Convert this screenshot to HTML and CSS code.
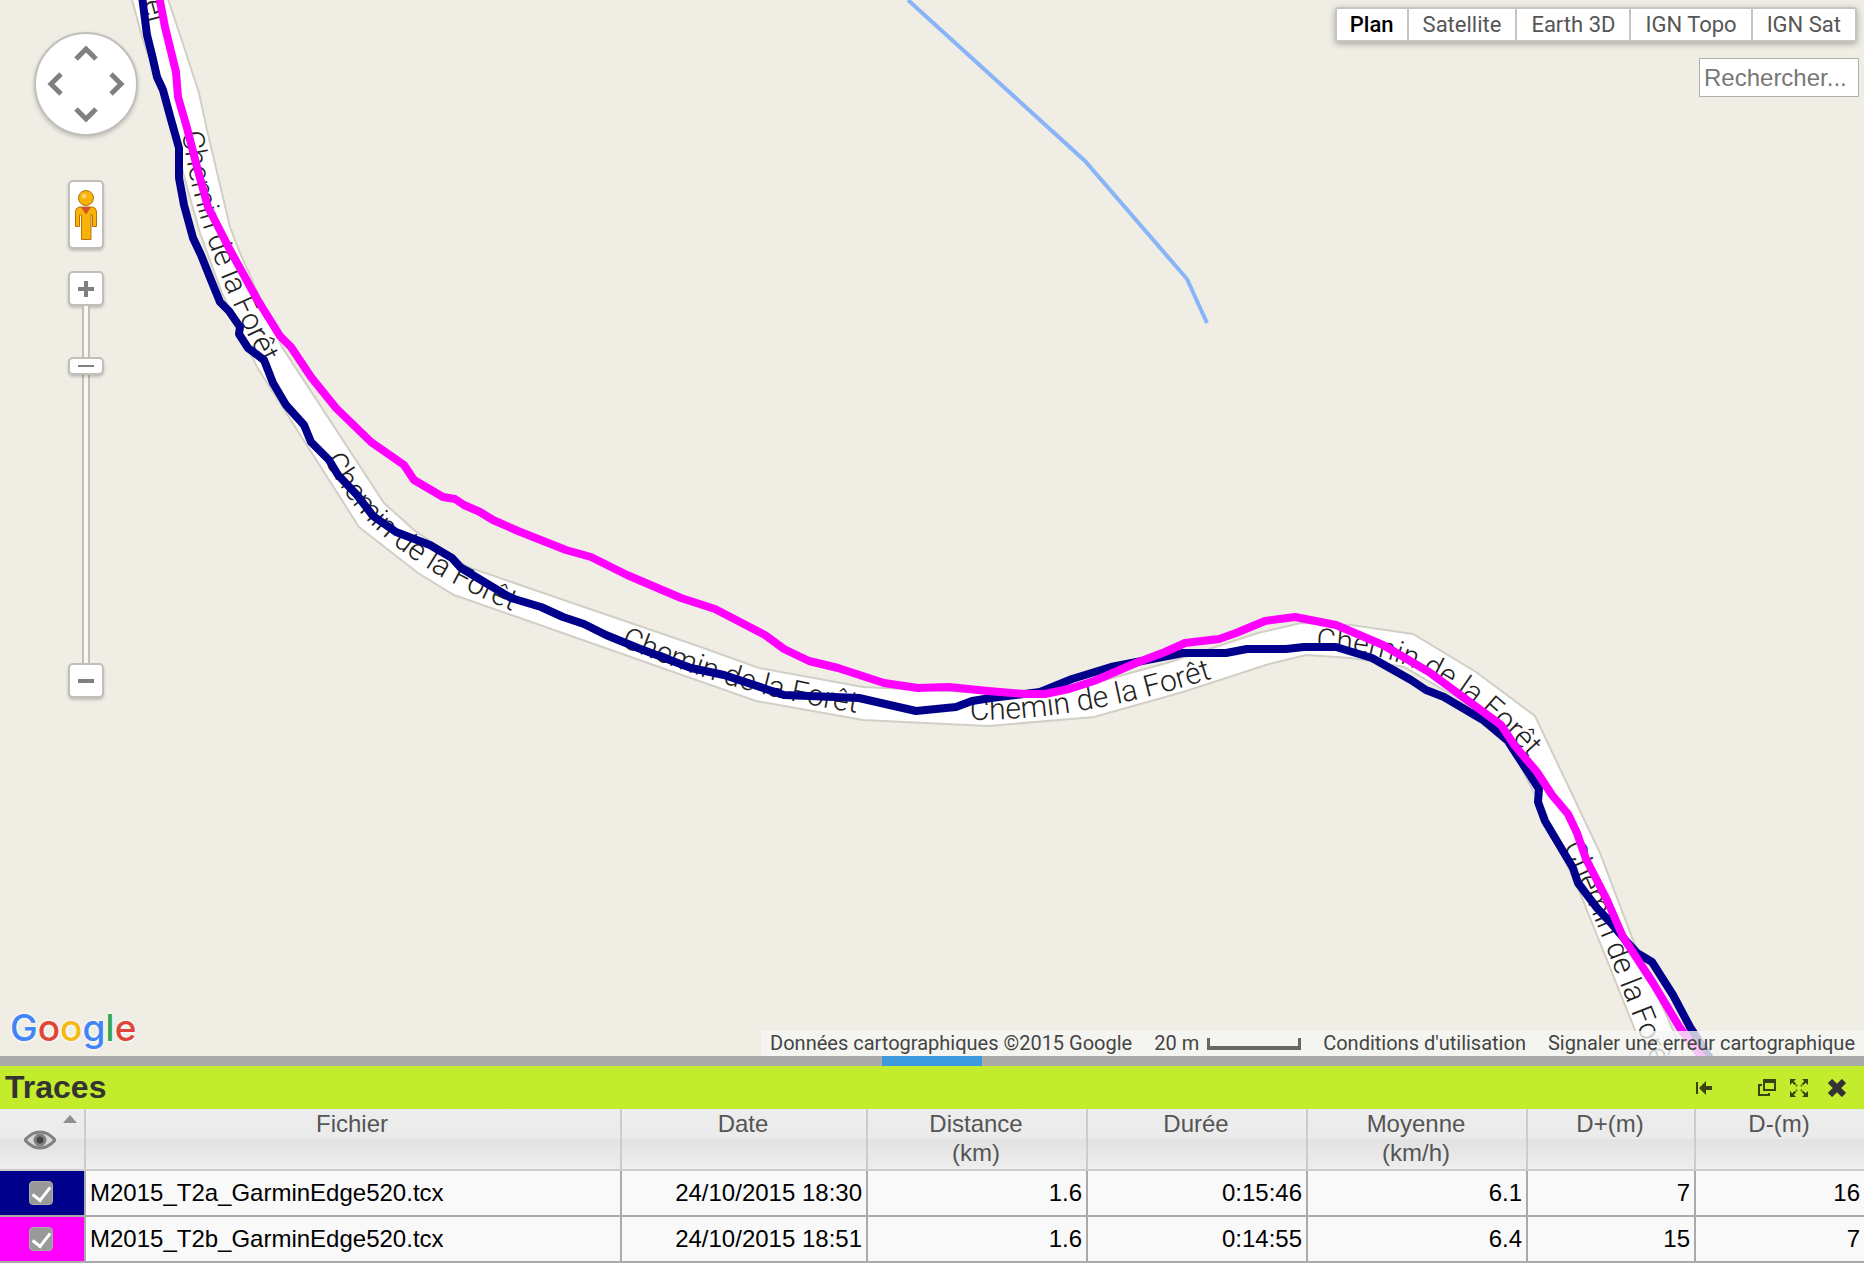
FILE: index.html
```html
<!DOCTYPE html>
<html lang="fr">
<head>
  <meta charset="UTF-8" />
  <meta name="viewport" content="width=device-width, initial-scale=1" />
  <title>Traces</title>
  <link rel="stylesheet" href="styles.css">
</head>
<body>
  <main class="map">
    <svg class="map-canvas" viewBox="0 0 1864 1056" preserveAspectRatio="xMidYMid slice">
      <defs>
        <path id="label0" d="M143 2 L152 36" />
        <path id="label1" d="M182 132 C194 222 226 294 268 376" />
        <path id="label2" d="M324 460 C358 520 400 566 524 616" />
        <path id="label3" d="M620 646 C705 680 760 698 870 715" />
        <path id="label4" d="M970 720 C1060 720 1140 702 1226 674" />
        <path id="label5" d="M1316 650 C1396 650 1456 678 1526 754" />
        <path id="label6" d="M1563 846 C1597 920 1616 975 1662 1090" />
      </defs>

      <!-- Stream -->
      <polyline class="stream" points="908,0 1085,161 1187,279 1207,323" />

      <!-- Road -->
      <path class="road" d="M167 -4 L185 50 L199 93 L207 130 L230 227 L240 253 L282 347 L384 503 L414 530 L468 567 L520 585 L695 645 L759 668 L863 687 L988 693 L1080 687 L1170 662 L1258 633 L1301 623 L1351 625 L1413 634 L1476 672 L1535 716 L1600 853 L1633 940 L1673 1030 L1686 1062
        L1645 1062 L1635 1030 L1580 893 L1538 800 L1504 735 L1461 700 L1404 667 L1351 658 L1306 655 L1269 664 L1183 692 L1094 717 L988 726 L863 720 L756 701 L520 618 L454 595 L418 573 L359 527 L257 367 L222 293 L200 233 L185 180 L170 120 L143 40 L131 -4 Z" />

      <g class="road-names">
        <text><textPath href="#label0">er</textPath></text>
        <text><textPath href="#label1">Chemin de la Forêt</textPath></text>
        <text><textPath href="#label2">Chemin de la Forêt</textPath></text>
        <text><textPath href="#label3">Chemin de la Forêt</textPath></text>
        <text><textPath href="#label4">Chemin de la Forêt</textPath></text>
        <text><textPath href="#label5">Chemin de la Forêt</textPath></text>
        <text><textPath href="#label6">Chemin de la Forêt</textPath></text>
      </g>

      <!-- GPS tracks -->
      <polyline class="track track-a" points="142,-4 147,35 152,55 157,77 163,90 170,116 179,148 179,178 184,205 193,238 201,255 211,280 220,302 229,311 240,327 239,334 248,348 264,360 273,383 286,405 304,425 311,442 329,460 338,475 357,495 373,516 396,532 430,545 452,558 461,568 511,598 541,607 563,617 584,624 606,635 638,648 691,668 724,675 784,695 859,698 916,711 956,707 972,701 991,698 1040,692 1072,679 1111,667 1147,660 1183,653 1226,653 1247,649 1286,649 1304,647 1336,647 1372,658 1411,680 1426,690 1444,697 1483,720 1508,741 1515,752 1539,789 1538,802 1545,821 1573,868 1578,883 1597,908 1610,922 1627,942 1637,953 1652,962 1673,995 1690,1027 1711,1060" />
      <polyline class="track track-b" points="159,-4 165,27 176,72 178,97 187,128 197,167 208,207 230,250 257,299 280,336 291,347 311,377 336,408 371,442 404,465 414,480 443,497 455,499 464,505 480,512 493,520 518,531 566,550 591,557 627,575 681,598 715,609 765,635 784,649 809,661 838,668 884,683 918,688 949,687 988,691 1024,694 1045,694 1069,689 1094,681 1136,663 1165,652 1185,643 1219,639 1236,633 1265,621 1295,617 1336,625 1383,645 1429,672 1501,725 1515,746 1537,772 1552,795 1568,814 1577,833 1586,859 1607,900 1623,937 1653,983 1680,1028 1704,1060" />
    </svg>

    <div class="map-controls">
      <div class="pan">
        <button class="pan-up" aria-label="Haut"><svg viewBox="0 0 24 24"><path d="M2 17 L12 7 L22 17" /></svg></button>
        <button class="pan-left" aria-label="Gauche"><svg viewBox="0 0 24 24"><path d="M17 2 L7 12 L17 22" /></svg></button>
        <button class="pan-right" aria-label="Droite"><svg viewBox="0 0 24 24"><path d="M7 2 L17 12 L7 22" /></svg></button>
        <button class="pan-down" aria-label="Bas"><svg viewBox="0 0 24 24"><path d="M2 7 L12 17 L22 7" /></svg></button>
      </div>
      <button class="pegman" aria-label="Street View">
        <svg viewBox="0 0 24 52">
          <path class="peg-body" d="M5 18 H19 Q22.500 19 22.500 23 V37.500 H18.500 V26 H17 V50.500 H7.500 V26 H5.500 V37.500 H1.500 V23 Q1.500 19 5 18 Z" />
          <path class="peg-scarf" d="M7 18 H17 L12 25.500 Z" />
          <circle class="peg-head" cx="12" cy="9" r="7.500" />
          <circle class="peg-shine" cx="10" cy="7" r="2.500" />
        </svg>
      </button>
      <div class="zoom">
        <button class="zoom-btn" aria-label="Zoom avant"><svg viewBox="0 0 16 16"><path d="M0 8 H16 M8 0 V16" /></svg></button>
        <input class="zoom-slider" type="range" min="0" max="20" value="3" aria-label="Zoom" />
        <button class="zoom-btn" aria-label="Zoom arrière"><svg viewBox="0 0 16 16"><path d="M0 8 H16" /></svg></button>
      </div>
    </div>

    <div class="map-top">
      <div class="map-types">
        <button class="selected">Plan</button>
        <button>Satellite</button>
        <button>Earth 3D</button>
        <button>IGN Topo</button>
        <button>IGN Sat</button>
      </div>
      <input class="search" type="text" placeholder="Rechercher..." aria-label="Rechercher" />
    </div>

    <a class="logo" href="#" aria-label="Google"><span class="g-blue">G</span><span class="g-red">o</span><span class="g-yellow">o</span><span class="g-blue">g</span><span class="g-green">l</span><span class="g-red">e</span></a>

    <div class="map-legal">
      <span>Données cartographiques ©2015 Google</span>
      <span class="scale">20 m <i class="scale-bar"></i></span>
      <a href="#">Conditions d'utilisation</a>
      <a href="#">Signaler une erreur cartographique</a>
    </div>
  </main>

  <div class="splitter"><div class="splitter-handle"></div></div>

  <section class="panel">
    <header class="panel-header">
      <h2>Traces</h2>
      <div class="panel-tools">
        <button class="tool-dock" aria-label="Ancrer"><svg viewBox="0 0 18 18"><path class="line" d="M2 3 V15" /><path d="M4 9 L11 2 V7 H17 V11 H11 V16 Z" /></svg></button>
        <button aria-label="Détacher"><svg viewBox="0 0 18 18"><path class="line" d="M4 6 H1 V16 H11 V14" /><path class="line" d="M6 2 H17 V11 H6 Z" /><path d="M5 0 H18 V4 H5 Z" /></svg></button>
        <button aria-label="Agrandir"><svg viewBox="0 0 18 18"><path d="M0 0 H6 L0 6 Z M18 0 V6 L12 0 Z M0 18 V12 L6 18 Z M18 18 H12 L18 12 Z" /><path class="line" d="M2 2 L7 7 M16 2 L11 7 M2 16 L7 11 M16 16 L11 11" stroke-dasharray="5 1" /></svg></button>
        <button class="tool-close" aria-label="Fermer"><svg viewBox="0 0 18 18"><path class="line" d="M2 2 L16 16 M16 2 L2 16" /></svg></button>
      </div>
    </header>

    <table class="traces">
      <colgroup>
        <col class="col-eye"><col class="col-file"><col class="col-date"><col class="col-num"><col class="col-num"><col class="col-num"><col class="col-climb"><col class="col-climb">
      </colgroup>
      <thead>
        <tr>
          <th class="eye-head" aria-label="Visible">
            <svg class="sort" viewBox="0 0 14 8"><path d="M7 0 L14 8 H0 Z" /></svg>
            <svg class="eye" viewBox="0 0 32 20"><path d="M1 10 Q8 2 16 2 Q24 2 31 10 Q24 18 16 18 Q8 18 1 10 Z" /><circle cx="16" cy="10" r="5" /></svg>
          </th>
          <th>Fichier</th>
          <th>Date</th>
          <th>Distance<br>(km)</th>
          <th>Durée</th>
          <th>Moyenne<br>(km/h)</th>
          <th>D+(m)</th>
          <th>D-(m)</th>
        </tr>
      </thead>
      <tbody>
        <tr>
          <td class="color-a"><input type="checkbox" checked aria-label="Afficher M2015_T2a_GarminEdge520.tcx" /></td>
          <td class="file">M2015_T2a_GarminEdge520.tcx</td>
          <td>24/10/2015 18:30</td>
          <td>1.6</td>
          <td>0:15:46</td>
          <td>6.1</td>
          <td>7</td>
          <td>16</td>
        </tr>
        <tr>
          <td class="color-b"><input type="checkbox" checked aria-label="Afficher M2015_T2b_GarminEdge520.tcx" /></td>
          <td class="file">M2015_T2b_GarminEdge520.tcx</td>
          <td>24/10/2015 18:51</td>
          <td>1.6</td>
          <td>0:14:55</td>
          <td>6.4</td>
          <td>15</td>
          <td>7</td>
        </tr>
      </tbody>
    </table>
  </section>
</body>
</html>
```
FILE: styles.css
```css
* {
  box-sizing: border-box;
}

body {
  font-family: "Liberation Sans", Arial, sans-serif;
  font-size: 24px;
  margin: 0;
  height: 100vh;
  display: flex;
  flex-direction: column;
  overflow: hidden;
  background: #ffffff;
}

button {
  font: inherit;
  padding: 0;
  border: none;
  background: none;
  cursor: pointer;
}

svg {
  display: block;
}

/* Map */
.map {
  position: relative;
  flex: 1;
  min-height: 0;
  overflow: hidden;
  background: #efede4;
}

.map-canvas {
  width: 100%;
  height: 100%;
}

.stream {
  fill: none;
  stroke: #8ab4f8;
  stroke-width: 4;
}

.road {
  fill: #ffffff;
  stroke: #d2cfc6;
  stroke-width: 2;
}

.road-names {
  font-family: Roboto, sans-serif;
  font-weight: 300;
  font-size: 30px;
  fill: #222222;
}

.track {
  fill: none;
  stroke-width: 8;
  stroke-linejoin: round;
}

.track-a {
  stroke: #00008b;
}

.track-b {
  stroke: #ff00ff;
}

.map-controls {
  position: absolute;
  top: 32px;
  left: 34px;
  display: flex;
  flex-direction: column;
  align-items: center;
}

.pan {
  display: grid;
  grid-template-columns: repeat(3, 1fr);
  grid-template-rows: repeat(3, 1fr);
  place-items: center;
  width: 104px;
  height: 104px;
  padding: 5px;
  border: 2px solid #c0bfb9;
  border-radius: 50%;
  background: #ffffff;
  box-shadow: 0 2px 4px rgba(0,0,0,0.2);
}

.pan svg {
  width: 24px;
  height: 24px;
  fill: none;
  stroke: #808080;
  stroke-width: 5;
}

.pan-up {
  grid-area: 1 / 2;
}

.pan-left {
  grid-area: 2 / 1;
}

.pan-right {
  grid-area: 2 / 3;
}

.pan-down {
  grid-area: 3 / 2;
}

.pegman,
.zoom-btn {
  display: flex;
  align-items: center;
  justify-content: center;
  width: 36px;
  border: 2px solid #c0bfb9;
  border-radius: 5px;
  background: #ffffff;
  box-shadow: 0 2px 3px rgba(0,0,0,0.2);
}

.pegman {
  height: 69px;
  margin: 44px 0 22px;
}

.pegman svg {
  width: 24px;
  height: 52px;
}

.peg-body,
.peg-head {
  fill: #f9b208;
  stroke: #b8720c;
  stroke-width: 1;
}

.peg-scarf {
  fill: #d2502c;
}

.peg-shine {
  fill: #fbd35d;
}

.zoom {
  display: flex;
  flex-direction: column;
  align-items: center;
}

.zoom-btn {
  height: 35px;
}

.zoom-btn svg {
  width: 16px;
  height: 16px;
  fill: none;
  stroke: #808080;
  stroke-width: 4;
}

.zoom-slider {
  -webkit-appearance: none;
  appearance: none;
  writing-mode: vertical-lr;
  width: 36px;
  height: 357px;
  margin: 0;
  background: linear-gradient(to right, #c0bfb9 2px, #f7f7f3 2px, #f7f7f3 6px, #c0bfb9 6px) center / 8px 100% no-repeat;
}

.zoom-slider::-webkit-slider-thumb {
  -webkit-appearance: none;
  width: 36px;
  height: 18px;
  border: 2px solid #c0bfb9;
  border-radius: 5px;
  background: linear-gradient(#808080, #808080) center / 16px 2px no-repeat #ffffff;
  box-shadow: 0 2px 3px rgba(0,0,0,0.2);
}

.map-top {
  position: absolute;
  top: 7px;
  right: 5px;
  display: flex;
  flex-direction: column;
  align-items: flex-end;
  gap: 16px;
}

.map-types {
  display: flex;
  margin-right: 2px;
  border: 2px solid #c6c5bf;
  border-radius: 3px;
  background: #ffffff;
  box-shadow: 0 2px 6px rgba(0,0,0,0.3);
}

.map-types button {
  font-family: Roboto, sans-serif;
  font-size: 22px;
  line-height: 31px;
  padding: 0 14px;
  color: #565656;
}

.map-types button + button {
  border-left: 2px solid #c6c5bf;
}

.map-types .selected {
  font-weight: 500;
  padding: 0 13px;
  color: #000000;
}

.search {
  font: inherit;
  width: 160px;
  height: 39px;
  padding: 0 4px;
  border: 1px solid #b0b0b0;
  background: #ffffff;
}

.search::placeholder {
  color: #777777;
}

.logo {
  position: absolute;
  left: 10px;
  bottom: 4px;
  font-family: Inter, sans-serif;
  font-size: 37px;
  font-weight: 500;
  line-height: 48px;
  text-decoration: none;
  text-shadow: 0 0 3px #ffffff, 0 0 3px #ffffff;
}

.g-blue {
  color: #4285f4;
}

.g-red {
  color: #e0453a;
}

.g-yellow {
  color: #f4b912;
}

.g-green {
  color: #34a853;
}

.map-legal {
  position: absolute;
  right: 0;
  bottom: 0;
  display: flex;
  gap: 22px;
  padding: 0 9px;
  font-family: Roboto, sans-serif;
  font-size: 20px;
  line-height: 25px;
  color: #444444;
  background: rgba(245,245,242,0.8);
}

.map-legal a {
  color: #444444;
  text-decoration: none;
}

.scale {
  display: flex;
  align-items: center;
  gap: 8px;
}

.scale-bar {
  width: 94px;
  height: 12px;
  border: solid #666666;
  border-width: 0 3px 4px;
}

/* Splitter */
.splitter {
  display: flex;
  justify-content: center;
  height: 10px;
  background: #aaaaaa;
}

.splitter-handle {
  width: 100px;
  background: #3d98dc;
}

/* Traces panel */
.panel-header {
  display: flex;
  align-items: center;
  justify-content: space-between;
  height: 43px;
  padding: 0 18px 0 5px;
  background: #c3ec2c;
}

.panel-header h2 {
  margin: 0;
  font-size: 32px;
  color: #333333;
}

.panel-tools {
  display: flex;
  gap: 14px;
}

.panel-tools svg {
  width: 18px;
  height: 18px;
  fill: #3a4413;
}

.panel-tools .line {
  fill: none;
  stroke: #3a4413;
  stroke-width: 2;
}

.tool-dock {
  margin-right: 31px;
}

.tool-close {
  margin-left: 6px;
}

.panel-tools .tool-close .line {
  stroke: #333333;
  stroke-width: 6;
}

.traces {
  width: 100%;
  table-layout: fixed;
  border-collapse: separate;
  border-spacing: 0;
  margin-bottom: 1px;
}

.col-eye {
  width: 86px;
}

.col-date {
  width: 246px;
}

.col-num {
  width: 220px;
}

.col-climb {
  width: 168px;
}

.traces th {
  height: 62px;
  padding: 0 2px 0 0;
  font-weight: normal;
  line-height: 29px;
  vertical-align: top;
  color: #555555;
  border-right: 2px solid #cccccc;
  border-bottom: 2px solid #cccccc;
  background: linear-gradient(#ededed, #ebebeb 48%, #e2e2e2 52%, #eeeeee);
}

.traces td {
  height: 46px;
  padding: 0 4px;
  text-align: right;
  color: #000000;
  background: #f9f9f9;
  border-right: 2px solid #aaaaaa;
  border-bottom: 2px solid #aaaaaa;
}

.traces th:last-child,
.traces td:last-child {
  border-right: none;
}

.traces .file {
  text-align: left;
}

.traces .color-a,
.traces .color-b {
  padding: 0 6px 0 4px;
}

.traces .color-a {
  background: #00008b;
}

.traces .color-b {
  background: #ff00ff;
}

.sort {
  width: 14px;
  height: 8px;
  margin: 6px 5px 0 auto;
  fill: #909090;
}

.eye {
  width: 32px;
  height: 20px;
  margin: 7px 0 0 24px;
  fill: #d8d8d8;
  stroke: #808080;
  stroke-width: 3;
}

.eye circle {
  fill: #444444;
}

.traces input {
  -webkit-appearance: none;
  appearance: none;
  display: block;
  width: 24px;
  height: 24px;
  margin: 0 auto;
  border: 1px solid #aaaaaa;
  border-radius: 4px;
  background: #999999;
}

.traces input:checked::before {
  content: "";
  display: block;
  width: 8px;
  height: 15px;
  margin: 1px auto;
  border: solid #ffffff;
  border-width: 0 3px 3px 0;
  transform: rotate(38deg);
}
```
